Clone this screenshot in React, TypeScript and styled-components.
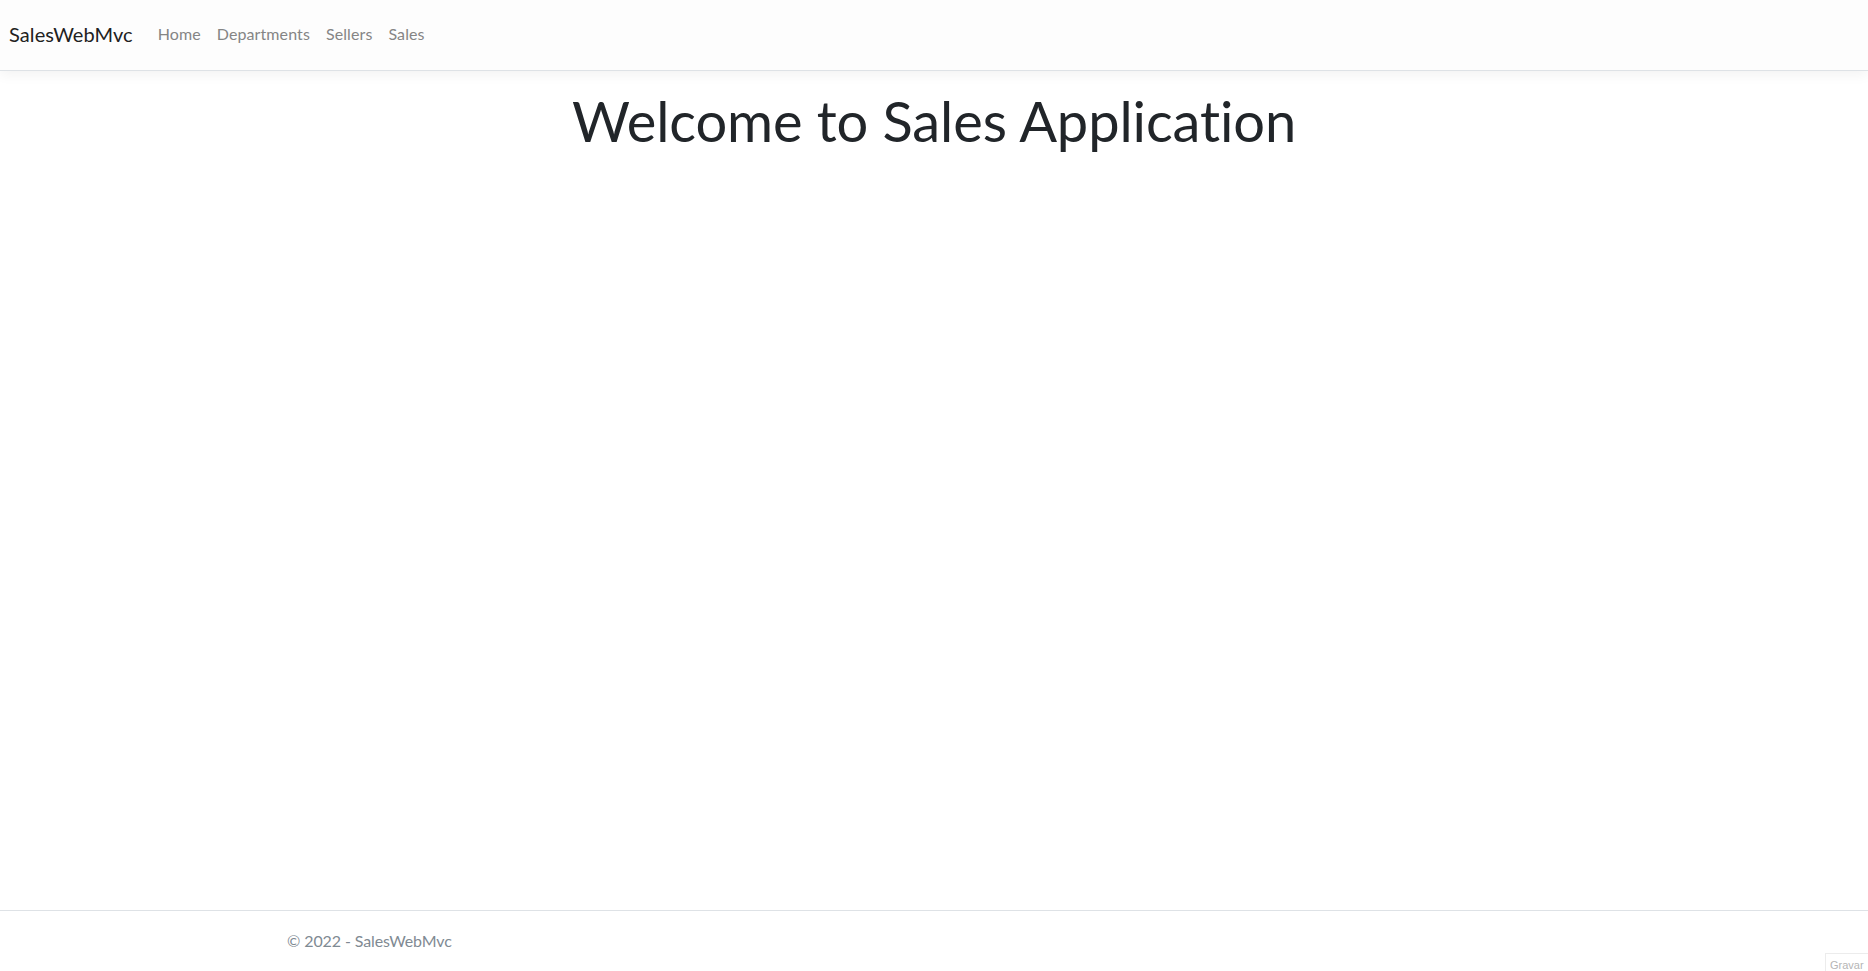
import React from "react";
import styled, { createGlobalStyle } from "styled-components";

const GlobalStyle = createGlobalStyle`
  html, body {
    margin: 0;
    padding: 0;
    background: #ffffff;
    font-family: Lato, "Liberation Sans", sans-serif;
    font-variant-ligatures: none;
    color: #212529;
  }
  * { box-sizing: border-box; }
`;

const Page = styled.div`
  min-height: 100vh;
  display: flex;
  flex-direction: column;
  position: relative;
`;

const NavBar = styled.header`
  height: 71px;
  display: flex;
  align-items: center;
  padding: 0 8px 3px 8px;
  background: #fdfdfd;
  border-bottom: 1px solid #dee2e6;
  box-shadow: 0 0.25rem 0.75rem rgba(0, 0, 0, 0.05);
`;

const Brand = styled.a`
  font-size: 20px;
  line-height: 30px;
  color: #212121;
  text-decoration: none;
  margin-right: 17px;
  padding-left: 1px;
  letter-spacing: 0.1px;
`;

const NavList = styled.nav`
  display: flex;
  align-items: center;
`;

const NavLink = styled.a`
  font-size: 16px;
  line-height: 24px;
  padding: 8px 8px;
  color: #858585;
  text-decoration: none;
  letter-spacing: 0.1px;
`;

const Main = styled.main`
  flex: 1;
  padding-top: 16px;
`;

const Title = styled.h1`
  margin: 0;
  text-align: center;
  font-size: 56px;
  font-weight: 400;
  line-height: 1.2;
  letter-spacing: -0.1px;
  color: #212529;
`;

const Footer = styled.footer`
  height: 61px;
  border-top: 1px solid #dee2e6;
  display: flex;
  justify-content: center;
`;

const FooterInner = styled.div`
  width: 1320px;
  padding: 0 12px 0 13px;
  line-height: 60px;
  font-size: 16px;
  letter-spacing: -0.1px;
  color: #7f8a93;
`;

const RecordBadge = styled.div`
  position: absolute;
  right: -10px;
  bottom: -12px;
  width: 53px;
  height: 30px;
  border: 1px solid #ececec;
  background: #ffffff;
  padding: 5px 0 0 4px;
  font-size: 11px;
  color: #b5b5b5;
  font-family: "Liberation Sans", sans-serif;
`;

export default function App() {
  return (
    <Page>
      <GlobalStyle />
      <NavBar>
        <Brand href="#">SalesWebMvc</Brand>
        <NavList>
          <NavLink href="#">Home</NavLink>
          <NavLink href="#">Departments</NavLink>
          <NavLink href="#">Sellers</NavLink>
          <NavLink href="#">Sales</NavLink>
        </NavList>
      </NavBar>
      <Main>
        <Title>Welcome to Sales Application</Title>
      </Main>
      <Footer>
        <FooterInner>&copy; 2022 - SalesWebMvc</FooterInner>
      </Footer>
      <RecordBadge>Gravar</RecordBadge>
    </Page>
  );
}
